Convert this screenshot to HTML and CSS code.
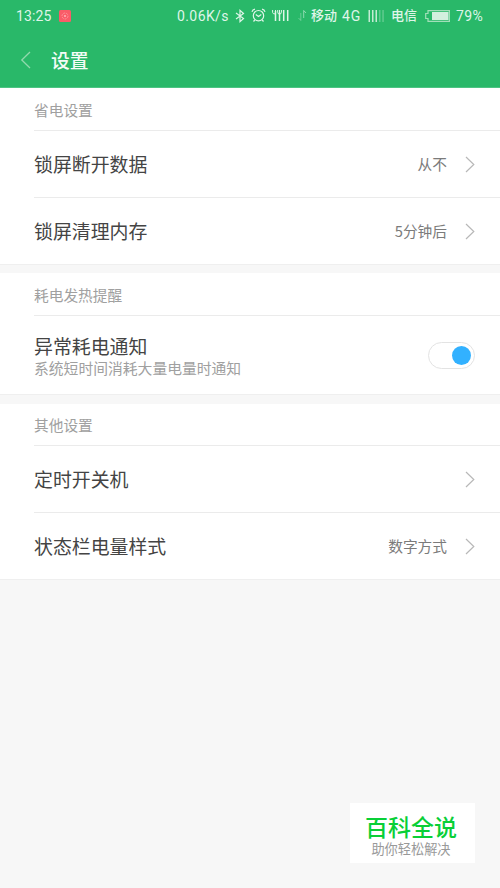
FILE: index.html
```html
<!DOCTYPE html>
<html lang="zh-CN">
<head>
<meta charset="utf-8">
<title>设置</title>
<link rel="stylesheet" href="styles.css">
</head>
<body>
<header class="header">
  <div class="status">
    <span class="time">13:25</span>
    <svg class="app" width="12" height="12" viewBox="0 0 12 12"><rect width="12" height="12" rx="1.5" fill="#f95c68"/><circle cx="6" cy="6" r="3" fill="none" stroke="#ff9ba1" stroke-width=".8" stroke-dasharray="2 1"/><circle cx="6" cy="6" r=".9" fill="#ffc0c3"/></svg>
    <span class="speed">0.06K/s</span>
    <svg class="bt" width="10" height="14" viewBox="0 0 10 14" fill="none" stroke="currentColor" stroke-width="1.2"><path d="M1 4l7.5 5.5L5 12.6V1.4l3.5 3.1L1 10"/></svg>
    <svg class="alarm" width="15" height="15" viewBox="0 0 15 15" fill="none" stroke="currentColor" stroke-width="1.2"><circle cx="7.5" cy="7.7" r="5.2"/><path d="M4.8 6.4l2.7 2 2.8-2M1 3.8Q1.5 1.5 4 1.2M14 3.8Q13.500 1.500 11 1.200M3.800 12L2.500 13.500M11.200 12l1.300 1.500"/></svg>
    <svg class="signal" width="17" height="13" viewBox="0 0 17 13" fill="none" stroke="currentColor"><path stroke-width="1.5" d="M3.500 2v10M7.500 3v9M11.700 1v11M15.700 1v11"/><path stroke-width="1" d="M.6 1v2.500q0 1.500 2.900 1.500M3.500 1v4M5.700 1v2.500q0 1.500 1.800 1.500M9.400 1v2.500q0 1.500-1.900 1.500M7.500 1v4"/></svg>
    <svg class="arrows" width="9" height="13" viewBox="0 0 9 13" fill="none" stroke="currentColor" stroke-width="1"><path opacity=".35" d="M2.800 4v7.500L.5 9"/><path opacity=".55" d="M5.700 9V1.500L8 4"/></svg>
    <span class="carrier">移动</span>
    <span class="net">4G</span>
    <svg class="bars" width="17" height="12" viewBox="0 0 17 12" fill="currentColor"><path d="M.5 0H2v12H.5zM4 0h1.500v12H4zM7.500 0H9v12H7.500z" opacity=".85"/><path d="M11 0h1.500v12H11zM14.300 0h1.500v12h-1.500z" opacity=".3"/></svg>
    <span class="carrier two">电信</span>
    <svg class="battery" width="25" height="12" viewBox="0 0 25 12"><path d="M3 .6h21.400v10.800H3V8.500H.7v-5H3z" fill="none" stroke="#a2dfb9" stroke-width="1.200"/><rect x="7" y="2" width="16.500" height="8" fill="#d4f0de"/></svg>
    <span class="percent">79%</span>
  </div>
  <div class="titlebar">
    <svg class="back" width="12" height="18" viewBox="0 0 12 18" fill="none" stroke="#91d9ad" stroke-width="1.300"><path d="M10 1L1.800 9 10 17"/></svg>
    <h1>设置</h1>
  </div>
</header>
<main>
  <section>
    <h2>省电设置</h2>
    <div class="row"><span class="label">锁屏断开数据</span><span class="value">从不</span><svg class="chev" viewBox="0 0 10 17"><path d="M1 1l7.800 7.500L1 16"/></svg></div>
    <div class="row"><span class="label">锁屏清理内存</span><span class="value">5分钟后</span><svg class="chev" viewBox="0 0 10 17"><path d="M1 1l7.800 7.500L1 16"/></svg></div>
  </section>
  <section class="notify">
    <h2>耗电发热提醒</h2>
    <div class="row tall"><div class="label">异常耗电通知<p>系统短时间消耗大量电量时通知</p></div><span class="switch"><i></i></span></div>
  </section>
  <section class="other">
    <h2>其他设置</h2>
    <div class="row"><span class="label">定时开关机</span><svg class="chev" viewBox="0 0 10 17"><path d="M1 1l7.800 7.500L1 16"/></svg></div>
    <div class="row"><span class="label">状态栏电量样式</span><span class="value">数字方式</span><svg class="chev" viewBox="0 0 10 17"><path d="M1 1l7.800 7.500L1 16"/></svg></div>
  </section>
</main>
<aside class="badge"><strong>百科全说</strong><span>助你轻松解决</span></aside>
</body>
</html>
```
FILE: styles.css
```css
* { box-sizing: border-box; }
body {
  margin: 0;
  height: 888px;
  overflow: hidden;
  background: #f7f7f7;
  font-family: "Noto Sans CJK SC", sans-serif;
  color: #444;
}
svg { display: block; flex: none; }
.header { height: 88px; background: #29b869; border-bottom: 1px solid #4dc483; }
.status {
  height: 31px;
  padding-left: 16px;
  display: flex;
  align-items: center;
  color: #dff5e8;
  font-family: Roboto, "Noto Sans CJK SC", sans-serif;
  font-size: 14px;
  line-height: 20px;
  white-space: nowrap;
}
.status span { flex: none; }
.time { width: 43px; letter-spacing: .1px; }
.speed { width: 52px; margin-left: 106px; letter-spacing: .4px; }
.bt { margin-left: 6px; }
.alarm { margin-left: 6px; }
.signal { margin-left: 6px; margin-top: -1px; }
.arrows { margin-left: 9px; }
.status .carrier { width: 26px; margin-left: 4px; font-family: "Noto Sans CJK SC", sans-serif; font-size: 13px; font-weight: 500; line-height: 18px; margin-top: -1px; }
.net { width: 20px; margin-left: 5px; letter-spacing: .8px; }
.bars { margin-left: 6px; }
.status .carrier.two { margin-left: 6px; }
.battery { margin-left: 8px; }
.percent { margin-left: 6px; letter-spacing: .4px; }
.titlebar { height: 57px; padding-left: 20px; display: flex; align-items: center; }
h1 { margin: 0 0 0 19px; font-size: 18.800px; line-height: 28px; font-weight: 500; color: #f3fcf6; }
section { background: #fff; border-bottom: 1px solid #efefef; margin-bottom: 8px; }
h2 {
  margin: 0 0 0 34px;
  height: 43px;
  border-bottom: 1px solid #ebebeb;
  font-size: 14.700px;
  line-height: 43px;
  font-weight: 400;
  color: #a0a0a0;
}
.notify { margin-bottom: 9px; }
.other h2 { height: 42px; line-height: 41px; }
.row {
  height: 67px;
  margin-left: 34px;
  padding-right: 25px;
  display: flex;
  align-items: center;
  border-bottom: 1px solid #ebebeb;
}
.row:last-child { height: 66px; border-bottom: 0; }
.label { flex: 1; font-size: 18.900px; line-height: 28px; }
.label p { margin: -3px 0 0; font-size: 14.800px; line-height: 22px; color: #a0a0a0; }
.value { font-size: 14.700px; line-height: 22px; color: #7b7b7b; margin-right: 18px; }
.chev { width: 10px; height: 17px; fill: none; stroke: #b8b8b8; stroke-width: 1.200; }
.row.tall:last-child { height: 78px; }
.switch {
  width: 47px;
  height: 27px;
  border: 1px solid #e3e3e3;
  border-radius: 14px;
  display: flex;
  align-items: center;
  justify-content: flex-end;
  padding-right: 3px;
}
.switch i { width: 19px; height: 19px; border-radius: 50%; background: #32b1ff; }
.badge {
  position: absolute;
  left: 350px;
  top: 803px;
  width: 125px;
  height: 60px;
  background: #fff;
  display: flex;
  flex-direction: column;
  align-items: center;
}
.badge strong { margin: 10px 0 0 -3px; font-size: 23px; line-height: 26px; font-weight: 500; color: #09cf37; }
.badge span { margin: 1px 0 0 -3px; font-size: 13.200px; line-height: 18px; color: #999; }
```
